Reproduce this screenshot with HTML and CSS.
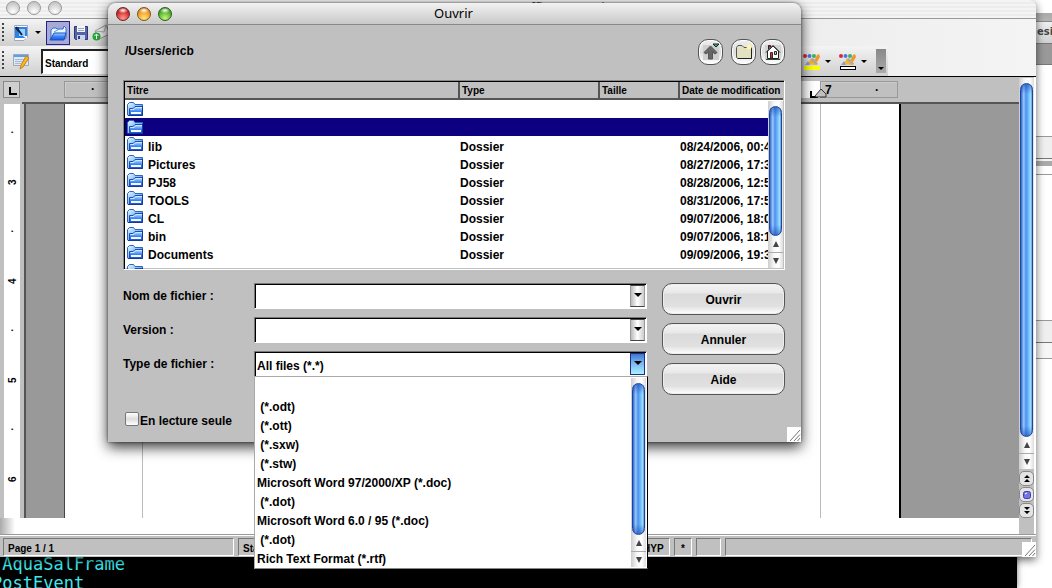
FILE: index.html
```html
<!DOCTYPE html>
<html lang="fr">
<head>
<meta charset="utf-8">
<title>Ouvrir</title>
<link rel="stylesheet" href="styles.css">
</head>
<body>
<svg class="defs" aria-hidden="true">
  <defs>
    <linearGradient id="fold" x1="0" y1="0" x2="1" y2="1"><stop offset="0" stop-color="#e4f6ff"/><stop offset=".45" stop-color="#8cc4fa"/><stop offset="1" stop-color="#1e5fe0"/></linearGradient>
    <linearGradient id="front" x1="0" y1="0" x2="0" y2="1"><stop offset="0" stop-color="#a8d4ff"/><stop offset=".5" stop-color="#3b86f5"/><stop offset="1" stop-color="#1c55d8"/></linearGradient>
    <symbol id="i-folder" viewBox="0 0 16 16">
      <path d="M.5 14V3.500L2.500 1.500H6.500L8 3.500H15.500V14.500H1Z" fill="url(#fold)" stroke="#2a66c0"/>
      <path d="M3 14V8.500H6.500L8.500 6.500H15V14Z" fill="url(#front)"/>
      <path d="M2.500 14V7.500H6L8 5.500H15" fill="none" stroke="#1c4fae"/>
      <path d="M3.500 8.500H7L9 6.500H15" fill="none" stroke="#cfe8ff"/>
      <path d="M4 11H14V13H4Z" fill="#f4f8ff"/>
      <path d="M1 14.500H15.500V5" fill="none" stroke="#123a96"/>
    </symbol>
    <symbol id="i-paint" viewBox="0 0 20 20">
      <circle cx="3" cy="4" r="2" fill="#d22c3a"/><circle cx="7.500" cy="4" r="2" fill="#4a78e0"/><circle cx="12" cy="4" r="2" fill="#3eb06c"/>
      <path d="M12 9L15 3L17 2L18 5L15 10Z" fill="#f0962a"/>
      <path d="M5 12L9 7L13 8L16 12L13 13Z" fill="#f5b62a"/><path d="M8 7L11 6L16 12L14 13Z" fill="#b4a79a"/><path d="M3 13L6 9L8 13Z" fill="#8a9bd8"/>
    </symbol>
    <symbol id="i-grip" viewBox="0 0 14 15"><path d="M3 14L13 3M7 14L13 7.500M10.500 14L13 11" stroke="#777" fill="none"/></symbol>
  </defs>
</svg>
<main class="desktop">
  <aside class="back">
    <div class="back-gap"></div><div class="back-tabs">esi</div><div class="back-dark"></div>
    <div class="back-pane one"></div><div class="back-pane-low chip"></div>
    <div class="back-pane two"></div><div class="back-pane-low"></div>
  </aside>
  <section class="terminal"><pre>˜AquaSalFrame
PostEvent</pre></section>

  <section class="writer">
    <header class="writer-title">
      <span class="light off"></span><span class="light off"></span><span class="light off"></span>
      <h2>Sans nom1 - OpenOffice.org Writer</h2>
    </header>
    <div class="tools">
      <div class="toolbar first">
        <span class="handle"></span>
        <button class="tool" aria-label="Nouveau"><svg width="18" height="18" viewBox="0 0 18 18"><path d="M2.500 1.500H15.500V13L12 16.500H2.500Z" fill="#fff" stroke="#9ba8bd"/><path d="M3 3H15V14H3Z" fill="#2c83e4"/><path d="M7 5H13V12H7Z" fill="#9bd0ff"/><path d="M4 3L10 11" stroke="#123" stroke-width="2"/><path d="M3 4L7 3L6 8Z" fill="#112d64"/><path d="M11 12H15V15Z" fill="#fff"/></svg></button>
        <svg class="arrow" width="6" height="3" viewBox="0 0 6 3"><path d="M0 0H6L3 3Z"/></svg>
        <button class="tool on" aria-label="Ouvrir un document"><svg width="18" height="16" viewBox="0 0 18 16"><path d="M2 14V5L4 3H7L8 4H14L15 1L17 3V13Z" fill="#eaf5ff" stroke="#2f6fd0"/><path d="M1 15L5 8H17L15 15Z" fill="url(#front)" stroke="#1c4fbe"/><path d="M5 7L12 3" stroke="#5a9be8"/></svg></button>
        <button class="tool" aria-label="Enregistrer"><svg width="16" height="16" viewBox="0 0 16 16"><path d="M1.500 1.500H14.500V14.500H2.500L1.500 13.500Z" fill="#5462a8" stroke="#2c3878"/><path d="M4 1H12V7H4Z" fill="#f2f5ff"/><path d="M5 3.500H11M5 5.500H11" stroke="#9aa"/><path d="M4 10H12V15H4Z" fill="#cdd4ea"/><path d="M5 11H7V14H5Z" fill="#334080"/></svg></button>
        <button class="tool mail" aria-label="Envoyer"><svg width="18" height="18" viewBox="0 0 18 18"><path d="M3 7L14 1L18 10L7 15Z" fill="#eee" stroke="#999"/><path d="M3 7L12 8L14 1" fill="none" stroke="#aaa"/><circle cx="4.500" cy="12.500" r="4" fill="#22a83c"/><path d="M4.500 15V10M2.500 12L4.500 10L6.500 12" stroke="#fff" fill="none"/></svg></button>
      </div>
      <div class="toolbar second">
        <span class="handle"></span>
        <button class="tool" aria-label="Styles"><svg width="18" height="18" viewBox="0 0 18 18"><path d="M1.500 2.500H16.500V13.500H1.500Z" fill="#dfe8f7" stroke="#9ab"/><path d="M2 3H16V5H2Z" fill="#5e9cf0"/><path d="M3 7.500H12M3 9.500H12M3 11.500H9" stroke="#aab8cc"/><path d="M14 4L17 6L11 15L8 17L9 13Z" fill="#f6b52c" stroke="#c98514"/></svg></button>
        <input class="style-name" aria-label="Style" value="Standard">
        <span class="spring"></span>
        <button class="tool color" aria-label="Surlignage"><svg width="20" height="14"><use href="#i-paint" width="20" height="20"/></svg><i class="swatch yellow"></i></button>
        <svg class="arrow" width="6" height="3" viewBox="0 0 6 3"><path d="M0 0H6L3 3Z"/></svg>
        <button class="tool color" aria-label="Arrière-plan"><svg width="20" height="14"><use href="#i-paint" width="20" height="20"/></svg><i class="swatch"></i></button>
        <svg class="arrow" width="6" height="3" viewBox="0 0 6 3"><path d="M0 0H6L3 3Z"/></svg>
        <button class="more" aria-label="Plus"><svg width="6" height="3" viewBox="0 0 6 3"><path d="M0 0H6L3 3Z"/></svg></button>
      </div>
    </div>
    <div class="work">
      <div class="sheet-area">
        <div class="ruler">
          <button class="tab-kind" aria-label="Tabulation"></button>
          <div class="ruler-out start">·</div>
          <div class="ruler-in"><svg width="18" height="18" viewBox="0 0 18 18"><path d="M1 10V17M0 16H8" stroke="#000" stroke-width="2"/><path d="M5 15L11 8L16 13V16H6Z" fill="#c0c0c0" stroke="#333"/></svg></div>
          <div class="ruler-out end"><span>7</span><span>·</span></div>
        </div>
        <div class="doc">
          <div class="vruler"><i>·</i><b>3</b><i>·</i><b>4</b><i>·</i><b>5</b><i>·</i><b>6</b></div>
          <div class="canvas"><div class="page"></div></div>
        </div>
        <div class="hscroll"></div>
      </div>
      <div class="side">
        <div class="scroll"><span class="thumb"></span><button class="up" aria-label="Haut"></button><button class="down" aria-label="Bas"></button></div>
        <button class="nav" aria-label="Page précédente"><svg width="6" height="8" viewBox="0 0 6 8"><path d="M3 0L6 3H0ZM3 4L6 7H0Z"/></svg></button>
        <button class="nav" aria-label="Navigation"><svg width="8" height="8" viewBox="0 0 8 8"><rect x=".5" y=".5" width="7" height="7" rx="2" fill="#7474e6" stroke="#3a3aa8"/><path d="M2 3L4 2" stroke="#fff"/></svg></button>
        <button class="nav" aria-label="Page suivante"><svg width="6" height="8" viewBox="0 0 6 8"><path d="M3 3L6 0H0ZM3 7L6 4H0Z"/></svg></button>
      </div>
    </div>
    <footer class="status">
      <span class="cell pages">Page 1 / 1</span><span class="cell wide">Standard</span><span class="cell hyp">HYP</span><span class="cell star">*</span><span class="cell blank"></span><span class="cell rest"></span>
    </footer>
    <svg class="grip" width="14" height="15"><use href="#i-grip"/></svg>
  </section>

  <section class="dialog" role="dialog" aria-labelledby="dlg">
    <header class="dialog-title">
      <button class="light red" aria-label="Fermer"></button><button class="light amber" aria-label="Réduire"></button><button class="light green" aria-label="Agrandir"></button>
      <h1 id="dlg">Ouvrir</h1>
    </header>
    <div class="dialog-body">
      <div class="path-row">
        <span class="path">/Users/ericb</span>
        <button class="round" aria-label="Niveau supérieur"><svg width="18" height="18" viewBox="0 0 18 18"><path d="M1 2H17V17H1Z" fill="#cfcfcf"/><path d="M8.500 3L15 9.500L13 11L10.500 9V16H6.500V9L4 11L2 9.500Z" fill="#666" stroke="#555"/><path d="M11 1H17L14 4Z" fill="#2fc23c" stroke="#123"/></svg></button>
        <button class="round second-round" aria-label="Nouveau dossier"><svg width="18" height="18" viewBox="0 0 18 18"><path d="M1.500 14V4.500L3 2.500H7L9 4.500H16.500V15.500H2.500Z" fill="#e2e2c2" stroke="#555"/><path d="M3 15.500H16.500V5" fill="none" stroke="#222"/><circle cx="14" cy="4" r="2.500" fill="#fff5a8"/></svg></button>
        <button class="round" aria-label="Dossier personnel"><svg width="18" height="18" viewBox="0 0 18 18"><path d="M1 2H17V17H1Z" fill="#d2d2d2"/><path d="M3.500 8V15.500H14.500V8L9 3Z" fill="#fff" stroke="#222"/><path d="M2 9.500L9 2.500L16 9.500" fill="none" stroke="#222"/><path d="M4.500 6V2.500H6.500V4" stroke="#222" fill="#a33"/><path d="M6.500 9.500H8.500V15H6.500Z" fill="#a8453a" stroke="#522"/><path d="M10.500 8.500H12.500V11.500H10.500Z" fill="#bcd" stroke="#222"/><path d="M2 16.500H16" stroke="#253"/></svg></button>
      </div>
      <div class="files">
        <table>
          <colgroup><col><col class="c-type"><col class="c-size"><col class="c-date"></colgroup>
          <thead><tr><th>Titre</th><th>Type</th><th>Taille</th><th>Date de modification</th></tr></thead>
          <tbody>
            <tr><td><svg class="fi"><use href="#i-folder"/></svg></td><td></td><td></td><td></td></tr>
            <tr class="selected"><td><svg class="fi"><use href="#i-folder"/></svg></td><td></td><td></td><td></td></tr>
            <tr><td><svg class="fi"><use href="#i-folder"/></svg>lib</td><td>Dossier</td><td></td><td>08/24/2006, 00:43</td></tr>
            <tr><td><svg class="fi"><use href="#i-folder"/></svg>Pictures</td><td>Dossier</td><td></td><td>08/27/2006, 17:32</td></tr>
            <tr><td><svg class="fi"><use href="#i-folder"/></svg>PJ58</td><td>Dossier</td><td></td><td>08/28/2006, 12:51</td></tr>
            <tr><td><svg class="fi"><use href="#i-folder"/></svg>TOOLS</td><td>Dossier</td><td></td><td>08/31/2006, 17:54</td></tr>
            <tr><td><svg class="fi"><use href="#i-folder"/></svg>CL</td><td>Dossier</td><td></td><td>09/07/2006, 18:07</td></tr>
            <tr><td><svg class="fi"><use href="#i-folder"/></svg>bin</td><td>Dossier</td><td></td><td>09/07/2006, 18:13</td></tr>
            <tr><td><svg class="fi"><use href="#i-folder"/></svg>Documents</td><td>Dossier</td><td></td><td>09/09/2006, 19:32</td></tr>
            <tr><td><svg class="fi"><use href="#i-folder"/></svg></td><td></td><td></td><td></td></tr>
          </tbody>
        </table>
        <div class="scroll files-scroll"><span class="thumb"></span><button class="up" aria-label="Haut"></button><button class="down" aria-label="Bas"></button></div>
      </div>
      <form class="form">
        <div class="fields">
          <div class="field"><label for="name">Nom de fichier :</label>
            <div class="combo"><input id="name" type="text"><span class="drop"></span></div></div>
          <div class="field"><label for="version">Version :</label>
            <div class="combo"><select id="version"><option></option></select><span class="drop"></span></div></div>
          <div class="field"><label for="type">Type de fichier :</label>
            <div class="combo"><select id="type"><option>All files (*.*)</option></select><span class="drop active"></span>
              <div class="popup">
                <ul role="listbox" aria-label="Type de fichier">
                  <li role="option"> </li>
                  <li role="option"> (*.odt)</li>
                  <li role="option"> (*.ott)</li>
                  <li role="option"> (*.sxw)</li>
                  <li role="option"> (*.stw)</li>
                  <li role="option">Microsoft Word 97/2000/XP (*.doc)</li>
                  <li role="option"> (*.dot)</li>
                  <li role="option">Microsoft Word 6.0 / 95 (*.doc)</li>
                  <li role="option"> (*.dot)</li>
                  <li role="option">Rich Text Format (*.rtf)</li>
                </ul>
                <div class="scroll"><span class="thumb"></span><button type="button" class="up" aria-label="Haut"></button><button type="button" class="down" aria-label="Bas"></button></div>
              </div>
            </div></div>
          <div class="readonly"><input type="checkbox" id="ro"><label for="ro">En lecture seule</label></div>
        </div>
        <div class="actions">
          <button type="button">Ouvrir</button>
          <button type="button">Annuler</button>
          <button type="button">Aide</button>
        </div>
      </form>
    </div>
    <svg class="grip" width="14" height="15"><use href="#i-grip"/></svg>
  </section>
</main>
</body>
</html>
```
FILE: styles.css
```css
* { box-sizing: border-box; }
body { margin: 0; font: bold 12px/18px "Liberation Sans", Arial, sans-serif; color: #000; background: #fff; }
button, input, select { font: inherit; color: inherit; margin: 0; padding: 0; border: 0; border-radius: 0; background: none; }
svg { display: block; flex: none; }
.defs { position: absolute; width: 0; height: 0; }
.desktop { position: relative; height: 100vh; overflow: hidden; }

/* windows behind the writer window */
.back { position: absolute; top: 0; right: 0; width: 16px; bottom: 0; background: #fff; }
.back-gap { height: 22px; background: linear-gradient(#fff 13px, #aaa 13px, #b4b4b4); border-bottom: 1px solid #888; }
.back-tabs { height: 21px; padding-left: 1px; background: linear-gradient(#eee, #d0d0d0); font: bold 10px/20px "DejaVu Sans", sans-serif; color: #444; overflow: hidden; }
.back-dark { height: 22px; background: #999; border-top: 1px solid #777; border-bottom: 1px solid #777; }
.back-pane { height: 23px; border-top: 1px solid #999; border-bottom: 1px solid #777; background: #efefef; }
.back-pane.one { margin-top: 71px; }
.back-pane.two { margin-top: 145px; }
.back-pane-low { height: 16px; border-bottom: 1px solid #999; background: #f6f6f6; }
.back-pane-low.chip { background: linear-gradient(#f4f4f4 2px, #aaa 2px, #aaa 7px, #fff 7px); }

.terminal { position: absolute; left: 0; right: 35px; bottom: 0; height: 60px; background: #000; box-shadow: 0 0 6px #0008; overflow: hidden; }
.terminal pre { margin: 27px 0 0 -8px; font: 17px/19px "DejaVu Sans Mono", monospace; color: #3de9ee; }

/* writer window */
.writer { position: absolute; left: 0; right: 16px; top: 0; bottom: 31px; display: flex; flex-direction: column; background: #c0c0c0; border-radius: 0 6px 0 0; box-shadow: 0 3px 8px #0009; }
.writer-title { display: flex; gap: 7px; height: 19px; padding: 1px 6px; background: repeating-linear-gradient(#f4f4f4 0 2px, #ececec 2px 4px); border-bottom: 1px solid #999; border-radius: 0 6px 0 0; }
.writer-title h2 { flex: 1; margin: 0 69px 0 0; text-align: center; font: 13px/12px "Noto Sans", sans-serif; color: #444; white-space: nowrap; }
.light { flex: none; width: 14px; height: 14px; border-radius: 50%; border: 1px solid #888; }
.off { background: radial-gradient(circle at 50% 80%, #fff, #c8c8c8 75%); border-color: #999; }
.red { background: radial-gradient(ellipse 5px 3px at 50% 20%, #fff, transparent), radial-gradient(circle at 50% 85%, #ff9a90, #d02a28 60%, #861a18); border-color: #6b2422; }
.amber { background: radial-gradient(ellipse 5px 3px at 50% 20%, #fff, transparent), radial-gradient(circle at 50% 85%, #ffe978, #f09a24 60%, #a85a10); border-color: #80501c; }
.green { background: radial-gradient(ellipse 5px 3px at 50% 20%, #fff, transparent), radial-gradient(circle at 50% 85%, #c8f578, #4fb02c 60%, #23700f); border-color: #2c5a1a; }
.tools { background: linear-gradient(90deg, #d8d8d8, #f4f4f4); border-bottom: 1px solid #000; }
.toolbar { display: flex; align-items: center; height: 27px; padding-left: 5px; background: linear-gradient(#f4f4f4, #cfcfcf); }
.toolbar.first { margin-right: 300px; }
.toolbar.second { height: 30px; margin-right: 148px; padding-right: 2px; }
.handle { width: 2px; height: 20px; margin-right: 6px; background: repeating-linear-gradient(#444 0 2px, transparent 2px 4px); margin-left: -3px; }
.tool { display: flex; flex: none; align-items: center; justify-content: center; width: 22px; height: 24px; }
.first .tool { margin-right: 2px; }
.first .arrow { margin: 0 5px 0 1px; }
.tool.on { background: #a9a9d8; border: 1px solid #23238a; width: 24px; }
.first .tool.on { margin-right: 0; }
.first .mail { margin-left: -4px; }
.style-name { width: 150px; height: 25px; padding: 4px 0 0 2px; margin-left: 9px; font-size: 10px; background: #fff; border: 1px solid #fff; border-top: 2px solid #222; border-left: 2px solid #222; }
.spring { flex: 1; }
.tool.color { flex-direction: column; margin-right: 2px; }
.swatch { width: 16px; height: 4px; border: 1px solid #000; background: #fff; }
.swatch.yellow { border-color: #ff0; background: #ff0; }
.second .arrow { margin-right: 6px; }
.more { display: flex; align-items: flex-end; justify-content: center; width: 10px; height: 24px; padding-bottom: 3px; margin-left: 3px; background: linear-gradient(#888, #aaa); }

.work { display: flex; flex: 1; min-height: 0; }
.sheet-area { display: flex; flex: 1; flex-direction: column; min-width: 0; }
.ruler { display: flex; align-items: center; height: 27px; padding: 1px 121px 1px 3px; border-bottom: 2px solid #555; border-image: linear-gradient(90deg, #c0c0c0 24px, #555 24px) 2; }
.tab-kind { position: relative; width: 17px; height: 17px; margin-right: 44px; border: 1px solid #888; background: #cfcfcf; }
.tab-kind::before { content: ""; position: absolute; left: 5px; top: 5px; width: 6px; height: 6px; border: solid #000; border-width: 0 0 2px 2px; }
.ruler-out { width: 78px; height: 17px; border: 1px solid #999; text-align: center; line-height: 15px; padding-right: 20px; box-shadow: inset 1px 1px #ccc; }
.ruler-in { display: flex; justify-content: flex-end; flex: 1; height: 17px; background: #fff; }
.ruler-in svg { position: relative; z-index: 1; margin-right: -8px; }
.ruler-out.end { display: flex; justify-content: space-between; padding: 0 18px 0 4px; line-height: 17px; }
.doc { display: flex; flex: 1; min-height: 0; overflow: hidden; }
.vruler { width: 16px; margin: 0 4px; padding-top: 4px; background: #fff; }
.vruler i, .vruler b { display: flex; align-items: center; justify-content: center; height: 50px; font-size: 10px; writing-mode: vertical-lr; transform: rotate(180deg); }
.vruler i { height: 49px; }
.canvas { display: flex; flex: 1; padding: 0 118px 0 38px; background: #999; border-left: 2px solid #555; }
.page { flex: 1; background: linear-gradient(90deg, #fff 77px, #bbb 77px, #bbb 78px, transparent 78px), linear-gradient(270deg, #fff 78px, #bbb 78px, #bbb 79px, #fff 79px); border-left: 1px solid #444; border-right: 2px solid #000; }
.hscroll { height: 16px; background: linear-gradient(90deg, #aaa, #fff 15px); }
.side { display: flex; flex-direction: column; align-items: center; gap: 1px; width: 17px; padding: 1px 0 16px; border-right: 2px solid #fff; }

/* scroll bars */
.scroll { display: flex; flex: none; flex-direction: column; width: 15px; padding-top: 5px; background: linear-gradient(90deg, #ccc, #f8f8f8 40%, #fff 70%, #ddd); }
.side .scroll { flex: 1; margin-bottom: 1px; }
.thumb { flex: 1; margin: 0 1px; border: 1px solid #1c469c; border-radius: 7px; background: linear-gradient(#0a35a880, transparent 10px, transparent calc(100% - 10px), #0a35a880), linear-gradient(90deg, #3168cf, #9cc8fa 25%, #4a92ee 45%, #6ab4fa 65%, #a4e2ff 90%, #4a88d8); }
.up, .down { height: 16px; display: flex; align-items: center; justify-content: center; }
.down { border-top: 1px solid #aaa; }
.up::before, .down::before { content: ""; border: solid transparent; border-width: 0 3px 6px; border-bottom-color: #444; }
.down::before { border-width: 6px 3px 0; border-top-color: #444; }
.nav { display: flex; align-items: center; justify-content: center; width: 15px; height: 15px; border: 1px solid #888; border-radius: 5px; background: #e4e4e4; }

.status { display: flex; gap: 4px; height: 23px; padding: 3px 4px 1px 3px; border-top: 1px solid #999; box-shadow: inset 0 1px #fff; font-size: 10px; line-height: 19px; }
.cell { height: 18px; padding-left: 4px; border: 1px solid #fff; border-top-color: #777; border-left-color: #777; white-space: nowrap; overflow: hidden; }
.pages { width: 231px; }
.wide { width: 396px; }
.hyp { width: 32px; }
.star { width: 18px; padding-left: 6px; }
.blank { width: 25px; }
.rest { flex: 1; }
.grip { position: absolute; right: 0; bottom: 0; background: #fff; }

/* dialog */
.dialog { position: absolute; left: 108px; right: 251px; top: 3px; background: #c0c0c0; border-radius: 8px 8px 0 0; box-shadow: 0 5px 14px #000c, 0 0 3px #0008; }
.dialog-title { display: flex; align-items: center; gap: 7px; height: 22px; padding: 0 8px; border-bottom: 1px solid #888; border-radius: 8px 8px 0 0; background: linear-gradient(#f2f2f2, #c9c9c9); }
.dialog-title h1 { flex: 1; margin: 0 65px 2px 0; text-align: center; font: 13px/18px "Noto Sans", sans-serif; }
.dialog-body { padding: 14px 16px 15px 15px; }
.path-row { display: flex; align-items: center; gap: 4px; margin-bottom: 15px; }
.path { flex: 1; padding: 0 0 2px 2px; }
.round { display: flex; align-items: center; justify-content: center; width: 25px; height: 26px; border: 1px solid #555; border-radius: 10px; background: linear-gradient(#eee, #ddd 50%, #fff); box-shadow: inset 0 0 0 1px #fff; }
.second-round { margin-left: 4px; }
.files { position: relative; height: 190px; overflow: hidden; border: 1px solid #fff; border-top-color: #888; border-left-color: #888; box-shadow: inset 1px 1px #000, inset -1px -1px #c0c0c0; padding: 1px; background: #fff; }
table { width: 100%; table-layout: fixed; border-collapse: separate; border-spacing: 0; }
.c-type { width: 140px; }
.c-size { width: 80px; }
.c-date { width: 105px; }
th { height: 18px; padding: 2px 0 0 2px; border-bottom: 2px solid #555; border-left: 2px solid #555; background: #c0c0c0; font-size: 10px; line-height: 14px; text-align: left; white-space: nowrap; }
th:first-child { border-left: 0; }
td { height: 18px; padding: 3px 0 0 2px; line-height: 15px; white-space: nowrap; }
td:not(:empty) { padding-top: 4px; line-height: 14px; }
.fi { float: left; width: 16px; height: 16px; margin: -4px 5px 0 0; }
.selected td { background: #0c0080; }
.files-scroll { position: absolute; right: 1px; top: 20px; bottom: 1px; }

.form { display: flex; gap: 15px; margin-top: 13px; }
.fields { flex: 1; display: flex; flex-direction: column; gap: 8px; min-width: 0; }
.field { display: grid; grid-template-columns: 131px 1fr; align-items: center; }
.combo { position: relative; display: flex; height: 26px; padding: 1px; border: 1px solid #fff; border-top-color: #777; border-left-color: #777; background: #fff; box-shadow: inset 1px 1px #000; }
.combo > input, .combo > select { flex: 1; min-width: 0; padding: 4px 0 0 1px; appearance: none; outline: 0; }
.drop { display: flex; align-items: center; justify-content: center; width: 15px; border: 1px solid #444; border-left-color: #999; border-right-color: #999; background: linear-gradient(90deg, #bbb, #fff 50%, #ccc); pointer-events: none; }
.drop::before { content: ""; border: solid transparent; border-width: 4px 4px 0; border-top-color: #000; margin-top: -3px; }
.drop.active { background: linear-gradient(#3a78d0, #76b0ee 40%, #a8f0ff); border-color: #1c2f88; }
.popup { position: absolute; z-index: 2; left: -1px; right: -2px; top: 24px; height: 193px; display: flex; overflow: hidden; padding: 1px 1px 1px 2px; background: #fff; border: 1px solid #aaa; border-right-color: #000; border-bottom-color: #888; }
.popup ul { flex: 1; margin: 0; padding: 0; list-style: none; }
.popup li { height: 19px; line-height: 20px; white-space: pre; }
.readonly { display: flex; align-items: center; gap: 1px; height: 16px; margin-top: 26px; }
.readonly label { padding-top: 3px; }
.readonly input { appearance: none; width: 14px; height: 14px; margin: 0 0 1px 2px; border: 1px solid #777; border-radius: 2px; background: linear-gradient(#fff, #ddd 50%, #fff); }
.actions { display: flex; flex-direction: column; gap: 8px; width: 123px; }
.actions button { height: 32px; padding-top: 2px; border: 1px solid #555; border-radius: 10px; background: linear-gradient(#f4f4f4, #e8e8e8 9px, #dadada 10px, #e0e0e0 22px, #fff); box-shadow: inset 0 0 0 1px #eee; }
```
